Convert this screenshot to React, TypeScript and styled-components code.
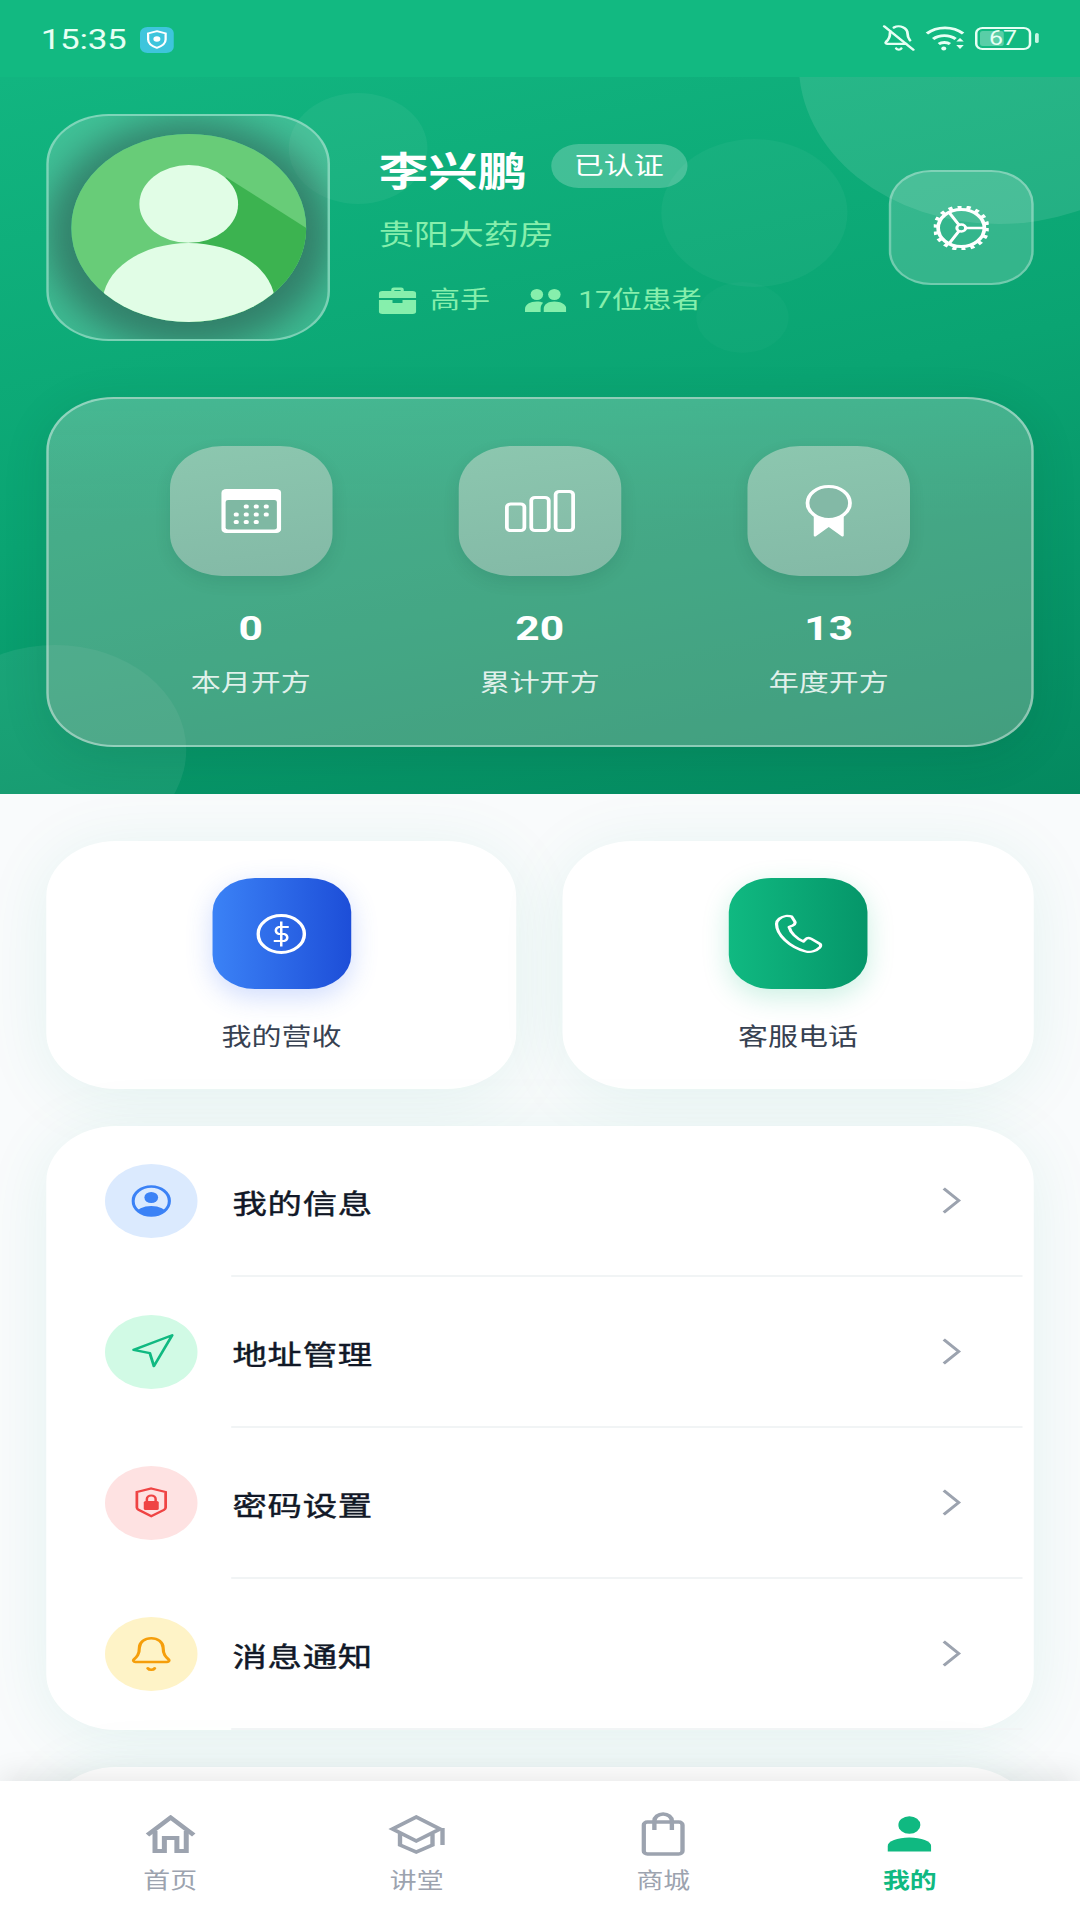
import * as React from "react";
import styled, { createGlobalStyle } from "styled-components";
import { Bell, BellOff, Navigation } from "lucide-react";

const CJK = `Roboto, "Noto Sans CJK SC", sans-serif`;

const GlobalStyle = createGlobalStyle`
  html, body {
    margin: 0;
    padding: 0;
    width: 1080px;
    height: 1920px;
    overflow: hidden;
    background: #f9fafb;
  }
  * { box-sizing: border-box; }
`;

// the reference is 864 wide layout stretched to 1080, so everything is built at 864
const Stage = styled.div`
  width: 864px;
  height: 1920px;
  transform: scaleX(1.25);
  transform-origin: 0 0;
  display: flex;
  flex-direction: column;
  overflow: hidden;
  font-family: ${CJK};
  background: #f9fafb;
`;

const StatusBar = styled.div`
  flex: none;
  height: 77px;
  padding: 0 39px 1px 32.5px;
  background: #12b981;
  display: flex;
  align-items: center;
  justify-content: space-between;
  position: relative;
  z-index: 2;
  color: #e6fff4;
`;
const StatusGroup = styled.div`
  display: flex;
  align-items: center;
`;
const ClockGroup = styled(StatusGroup)`
  margin-top: 3px;
`;
const Clock = styled.span`
  font-size: 28px;
  line-height: 32px;
  letter-spacing: -0.2px;
`;
const VpnBadge = styled.div`
  width: 27px;
  height: 26px;
  margin-left: 11px;
  border-radius: 6px;
  background: #3ec5dc;
  display: flex;
  align-items: center;
  justify-content: center;
`;
const WifiSlot = styled.div`
  margin-left: 7px;
  display: flex;
`;
const Battery = styled.div`
  width: 45px;
  height: 23px;
  margin-left: 7px;
  border: 2.5px solid #e6fff4;
  border-radius: 6px;
  position: relative;
  display: flex;
  align-items: center;
  justify-content: center;
  font-size: 20px;
  line-height: 18px;
  &::before {
    content: "";
    position: absolute;
    left: 2px;
    top: 2px;
    bottom: 2px;
    width: 19px;
    border-radius: 2px;
    background: rgba(255, 255, 255, 0.3);
  }
  &::after {
    content: "";
    position: absolute;
    right: -8px;
    top: 4px;
    width: 3px;
    height: 10px;
    border-radius: 2px;
    background: rgba(230, 255, 244, 0.85);
  }
`;
const BatteryValue = styled.span`
  position: relative;
`;

const Header = styled.div`
  flex: none;
  height: 717px;
  padding: 37px 37.5px 0 37px;
  position: relative;
  overflow: hidden;
  background: linear-gradient(165deg, #12b580 0%, #0aa472 50%, #04895f 100%);
`;
const Bubble = styled.div`
  position: absolute;
  border-radius: 50%;
`;
const CornerBubble = styled(Bubble)`
  left: 639px;
  top: -173px;
  width: 320px;
  height: 320px;
  background: rgba(255, 255, 255, 0.1);
`;
const AvatarBubble = styled(Bubble)`
  left: 231px;
  top: 16px;
  width: 111px;
  height: 111px;
  background: rgba(255, 255, 255, 0.05);
`;
const MiddleBubble = styled(Bubble)`
  left: 529px;
  top: 62px;
  width: 149px;
  height: 148px;
  background: rgba(255, 255, 255, 0.04);
`;
const SmallBubble = styled(Bubble)`
  left: 557px;
  top: 205px;
  width: 74px;
  height: 71px;
  background: rgba(255, 255, 255, 0.025);
`;
const LowBubble = styled(Bubble)`
  left: -61px;
  top: 568px;
  width: 210px;
  height: 210px;
  background: rgba(255, 255, 255, 0.07);
`;

const ProfileRow = styled.div`
  position: relative;
  display: flex;
  height: 227px;
`;
const AvatarPanel = styled.div`
  flex: none;
  width: 227px;
  height: 227px;
  border-radius: 50px;
  border: 2.5px solid rgba(255, 255, 255, 0.32);
  background: rgba(255, 255, 255, 0.2);
  overflow: hidden;
  display: flex;
  align-items: center;
  justify-content: center;
`;
const AvatarDisc = styled.svg`
  flex: none;
  width: 188px;
  height: 188px;
  border-radius: 50%;
  box-shadow: 0 6px 30px 20px rgba(40, 70, 65, 0.5);
`;
const ProfileInfo = styled.div`
  margin-left: 39px;
  padding-top: 30px;
`;
const NameRow = styled.div`
  display: flex;
  align-items: center;
  height: 44px;
`;
const Name = styled.h1`
  margin: 14px 0 0;
  font-size: 39.5px;
  line-height: 44px;
  font-weight: 700;
  color: #fff;
`;
const VerifiedBadge = styled.span`
  margin-left: 19px;
  height: 44px;
  padding: 0 18.5px;
  border-radius: 22px;
  background: rgba(255, 255, 255, 0.22);
  color: #fff;
  font-size: 24px;
  line-height: 44px;
`;
const Shop = styled.div`
  margin-top: 31px;
  font-size: 28px;
  line-height: 34px;
  color: #86efac;
`;
const MetaRow = styled.div`
  margin-top: 33px;
  display: flex;
  align-items: center;
  font-size: 24px;
  line-height: 28px;
  color: #86efac;
`;
const MetaText = styled.span`
  margin-left: 11px;
  margin-right: 28px;
`;
const PatientText = styled(MetaText)`
  margin-left: 9.5px;
`;
const GearTile = styled.div`
  flex: none;
  width: 116px;
  height: 115px;
  margin: 56px 0 0 auto;
  border-radius: 34px;
  border: 2.5px solid rgba(255, 255, 255, 0.3);
  background: rgba(255, 255, 255, 0.17);
  display: flex;
  align-items: center;
  justify-content: center;
`;

const GlassCard = styled.div`
  position: relative;
  margin-top: 56px;
  height: 350px;
  padding: 47px 46px 0;
  border-radius: 54px;
  border: 2.5px solid rgba(255, 255, 255, 0.4);
  background: linear-gradient(180deg, rgba(150, 205, 185, 0.42) 0%, rgba(160, 185, 172, 0.4) 35%);
  box-shadow: 0 10px 40px rgba(0, 60, 40, 0.12);
  display: grid;
  grid-template-columns: repeat(3, 1fr);
`;
const Stat = styled.div`
  display: flex;
  flex-direction: column;
  align-items: center;
  color: #fff;
`;
const StatTile = styled.div`
  width: 130px;
  height: 130px;
  border-radius: 42px;
  background: linear-gradient(170deg, #8cc7af, #83b9a6);
  box-shadow: 0 6px 14px rgba(0, 50, 35, 0.1);
  display: flex;
  align-items: center;
  justify-content: center;
`;
const StatValue = styled.div`
  margin-top: 32px;
  font-size: 34px;
  line-height: 40px;
  font-weight: 700;
`;
const StatLabel = styled.div`
  margin-top: 19px;
  font-size: 24px;
  line-height: 32px;
  color: rgba(255, 255, 255, 0.85);
`;

const Main = styled.div`
  flex: 1;
  min-height: 0;
  overflow: hidden;
  padding: 47px 37.5px 0 37px;
  background: #f9fbfc;
  display: flex;
  flex-direction: column;
  gap: 37px;
`;
const ActionRow = styled.div`
  flex: none;
  display: grid;
  grid-template-columns: 1fr 1fr;
  gap: 37px;
`;
const Card = styled.div`
  flex: none;
  background: #fff;
  border-radius: 56px;
  box-shadow: 0 8px 60px rgba(10, 150, 125, 0.09);
`;
const ActionCard = styled(Card)`
  height: 248px;
  padding-top: 37px;
  display: flex;
  flex-direction: column;
  align-items: center;
`;
const ActionTile = styled.div<{ $tone: "blue" | "green" }>`
  width: 111px;
  height: 111px;
  border-radius: 34px;
  display: flex;
  align-items: center;
  justify-content: center;
  color: #fff;
  background: ${(p) =>
    p.$tone === "blue"
      ? "linear-gradient(90deg, #3b82f6, #1d4ed8)"
      : "linear-gradient(90deg, #10b981, #059669)"};
  box-shadow: 0 8px 24px
    ${(p) => (p.$tone === "blue" ? "rgba(59, 110, 246, 0.24)" : "rgba(16, 185, 129, 0.22)")};
`;
const ActionLabel = styled.div`
  margin-top: 32px;
  font-size: 24px;
  line-height: 32px;
  color: #374151;
`;

const MenuCard = styled(Card)`
  height: 604px;
`;
const MenuRow = styled.div`
  height: 151px;
  padding-left: 47px;
  display: flex;
  align-items: center;
  position: relative;
  &::after {
    content: "";
    position: absolute;
    left: 148px;
    right: 9px;
    bottom: 0;
    height: 2px;
    background: #f1f4f5;
  }
`;
const MenuIcon = styled.div<{ $bg: string }>`
  flex: none;
  width: 74px;
  height: 74px;
  margin-bottom: 2px;
  border-radius: 50%;
  background: ${(p) => p.$bg};
  display: flex;
  align-items: center;
  justify-content: center;
`;
const MenuLabel = styled.div`
  margin-left: 28px;
  padding-top: 6px;
  font-size: 27.5px;
  line-height: 36px;
  letter-spacing: 0.6px;
  font-weight: 400;
  -webkit-text-stroke: 0.45px #111827;
  color: #111827;
`;
const Chevron = styled.svg`
  margin-left: auto;
  margin-right: 58px;
  margin-bottom: 3px;
`;
const NextCard = styled(Card)`
  height: 200px;
`;

const NavBar = styled.div`
  flex: none;
  height: 139px;
  padding: 31px 37.5px 0;
  background: #fff;
  position: relative;
  z-index: 2;
  box-shadow: 0 -6px 24px rgba(0, 0, 0, 0.09);
  display: grid;
  grid-template-columns: repeat(4, 1fr);
`;
const NavItem = styled.div<{ $active?: boolean }>`
  display: flex;
  flex-direction: column;
  align-items: center;
  color: ${(p) => (p.$active ? "#10b981" : "#9ca3af")};
  font-size: 21.5px;
  font-weight: ${(p) => (p.$active ? 700 : 400)};
`;
const NavGlyph = styled.div`
  height: 44px;
  display: flex;
  align-items: center;
  justify-content: center;
`;
const NavLabel = styled.div`
  margin-top: 11px;
  line-height: 28px;
`;

const stats = [
  { value: "0", label: "本月开方", icon: <CalendarIcon /> },
  { value: "20", label: "累计开方", icon: <BarsIcon /> },
  { value: "13", label: "年度开方", icon: <RibbonIcon /> },
];

const menu = [
  { label: "我的信息", bg: "#dbeafe", icon: <ProfileIcon /> },
  {
    label: "地址管理",
    bg: "#d1fae5",
    icon: <Navigation size={39} color="#10b981" strokeWidth={1.4} />,
  },
  { label: "密码设置", bg: "#fee2e2", icon: <ShieldLockIcon /> },
  { label: "消息通知", bg: "#fef3c7", icon: <Bell size={38} color="#f59e0b" strokeWidth={1.6} /> },
];

function CalendarIcon() {
  const dots = [
    [20, 17.5], [28, 17.5], [36, 17.5],
    [12, 25.5], [20, 25.5], [28, 25.5], [36, 25.5],
    [12, 33], [20, 33], [28, 33],
  ];
  return (
    <svg width="48" height="44" viewBox="0 0 48 44">
      <path d="M4 0h40a4 4 0 0 1 4 4v36a4 4 0 0 1-4 4H4a4 4 0 0 1-4-4V4a4 4 0 0 1 4-4z" fill="#fff" />
      <rect x="3.500" y="11" width="41" height="29.500" rx="2" fill="#7fb8a3" />
      {dots.map(([x, y]) => (
        <rect key={`${x}-${y}`} x={x - 2} y={y - 2} width="4" height="4" rx="1.5" fill="#fff" />
      ))}
    </svg>
  );
}

function BarsIcon() {
  return (
    <svg width="56" height="42" viewBox="0 0 56 42" fill="none" stroke="#fff" strokeWidth="3">
      <rect x="1.5" y="14" width="14" height="26.5" rx="3" />
      <rect x="21" y="7.5" width="14" height="33" rx="3" />
      <rect x="40.5" y="1.5" width="14" height="39" rx="3" />
    </svg>
  );
}

function RibbonIcon() {
  return (
    <svg width="38" height="52" viewBox="0 0 38 52">
      <path d="M7 30v20.500a1 1 0 0 0 1.700.7L19 42l10.300 9.200a1 1 0 0 0 1.700-.7V30z" fill="#fff" />
      <ellipse cx="19" cy="18" rx="17" ry="16.500" fill="#83b9a6" stroke="#fff" strokeWidth="3" />
    </svg>
  );
}

function GearIcon() {
  return (
    <svg width="44" height="44" viewBox="0 0 44 44" fill="none" stroke="#fff">
      <circle cx="22" cy="22" r="18.500" strokeWidth="3" />
      <circle cx="22" cy="22" r="21" strokeWidth="3.500" strokeDasharray="3.300 4.030" />
      <circle cx="22" cy="22" r="3.500" strokeWidth="2.500" />
      <path d="M25.500 22H40M20.200 19 12 6M20.200 25 12 38" strokeWidth="2.500" />
    </svg>
  );
}

function PhoneIcon() {
  return (
    <svg
      width="39"
      height="40"
      viewBox="0 0 35 40"
      preserveAspectRatio="none"
      fill="none"
      stroke="#fff"
      strokeWidth="2.300"
      strokeLinejoin="round"
    >
      <path d="M8.500 2C5 3 2 6 2 10c0 10.500 9 23 21 27.500 3.500 1.300 7.500-.5 10-4 1-1.500 1-3-.3-4l-6-4.800c-1.500-1-3-.7-4 .8l-1.400 2c-5.300-3-9.300-9-10.300-14.500l2.600-1.500c1.500-1 2-2.500 1.500-4l-2.400-5.200C11.800 2.300 10 1.500 8.500 2z" />
    </svg>
  );
}

function ProfileIcon() {
  return (
    <svg width="32" height="32" viewBox="0 0 32 32">
      <clipPath id="ringClip">
        <circle cx="16" cy="16" r="15" />
      </clipPath>
      <circle cx="16" cy="12.500" r="5.500" fill="#3b82f6" />
      <ellipse cx="16" cy="29" rx="12" ry="8" fill="#3b82f6" clipPath="url(#ringClip)" />
      <circle cx="16" cy="16" r="14.500" fill="none" stroke="#3b82f6" strokeWidth="2.500" />
    </svg>
  );
}

function ShieldLockIcon() {
  return (
    <svg width="26" height="31" viewBox="0 0 26 31">
      <path
        d="M13 1.500 24.500 5v15.500c0 1-.4 1.700-1.300 2.300L13 29.300 2.800 22.800c-.9-.6-1.300-1.300-1.300-2.300V5z"
        fill="none"
        stroke="#ef4444"
        strokeWidth="2.200"
      />
      <rect x="7" y="14" width="12" height="9" rx="1.500" fill="#ef4444" />
      <path d="M9.500 14.500v-2.500a3.500 3.500 0 0 1 7 0v2.500" fill="none" stroke="#ef4444" strokeWidth="2" />
    </svg>
  );
}

function WifiIcon() {
  return (
    <svg width="33" height="26" viewBox="0 0 33 26" fill="none" stroke="#e6fff4" strokeWidth="2.800">
      <path d="M1.500 8.500C9.500 1 22.500 1 30.500 8.500" />
      <path d="M6.500 14c5-4.500 13-4.500 18 0" />
      <path d="M11 19c2.500-2 6.500-2 9 0" />
      <circle cx="15" cy="23.500" r="2" fill="#e6fff4" stroke="none" />
      <path d="M25 16.500h6l-3-3.500zM25 20h6l-3 4z" fill="#e6fff4" stroke="none" />
    </svg>
  );
}

function NavHome() {
  return (
    <svg width="43" height="38" viewBox="0 0 43 38" fill="none" stroke="currentColor" strokeWidth="4">
      <path d="M3 20 21.500 2.500 40 20" />
      <path d="M9 16v20h7.500V23h10v13H34V16" />
    </svg>
  );
}

function NavSchool() {
  return (
    <svg width="47" height="39" viewBox="0 0 47 39" fill="none" stroke="currentColor" strokeWidth="3.500">
      <path d="M23 2 42 14 23 26 4 14z" />
      <path d="M10 19v11l13 7 13-7V19" />
      <path d="M44 13v17" />
    </svg>
  );
}

function NavBag() {
  return (
    <svg width="35" height="44" viewBox="0 0 35 44" fill="none" stroke="currentColor" strokeWidth="3.500">
      <rect x="2" y="10" width="31" height="32" rx="3" />
      <path d="M10.500 18V9a7 7 0 0 1 14 0v9" />
    </svg>
  );
}

function NavUser() {
  return (
    <svg width="35" height="36" viewBox="0 0 35 36" fill="currentColor">
      <circle cx="17.500" cy="9" r="8.800" />
      <path d="M0 35.500v-5C0 25 8 21.500 17.500 21.500S35 25 35 30.500v5z" />
    </svg>
  );
}

export default function App() {
  return (
    <Stage>
      <GlobalStyle />
      <StatusBar>
        <ClockGroup>
          <Clock>15:35</Clock>
          <VpnBadge>
            <svg width="17" height="19" viewBox="0 0 17 19">
              <path
                d="M8.500 1.200 15.500 3.500v6c0 3.800-3 6.700-7 8.300-4-1.600-7-4.500-7-8.300v-6z"
                fill="none"
                stroke="#fff"
                strokeWidth="1.800"
              />
              <circle cx="8.500" cy="9" r="2.800" fill="#fff" />
            </svg>
          </VpnBadge>
        </ClockGroup>
        <StatusGroup>
          <BellOff size={28} strokeWidth={1.9} />
          <WifiSlot>
            <WifiIcon />
          </WifiSlot>
          <Battery>
            <BatteryValue>67</BatteryValue>
          </Battery>
        </StatusGroup>
      </StatusBar>

      <Header>
        <CornerBubble />
        <AvatarBubble />
        <MiddleBubble />
        <SmallBubble />
        <LowBubble />

        <ProfileRow>
          <AvatarPanel>
            <AvatarDisc viewBox="0 0 100 100">
              <rect width="100" height="100" fill="#68cc78" />
              <path d="M66 23 100 50V100H50V40z" fill="#3cb350" />
              <ellipse cx="50" cy="37.200" rx="21" ry="20.700" fill="#e1fde6" />
              <ellipse cx="50" cy="90" rx="36.700" ry="32" fill="#e1fde6" />
            </AvatarDisc>
          </AvatarPanel>
          <ProfileInfo>
            <NameRow>
              <Name>李兴鹏</Name>
              <VerifiedBadge>已认证</VerifiedBadge>
            </NameRow>
            <Shop>贵阳大药房</Shop>
            <MetaRow>
              <svg width="30" height="27" viewBox="0 0 30 27" fill="#86efac">
                <path d="M10 4V2.500A2 2 0 0 1 12 .5h6a2 2 0 0 1 2 2V4h-2.500V3h-5v1z" />
                <path d="M3 4h24a3 3 0 0 1 3 3v4H0V7a3 3 0 0 1 3-3z" />
                <path d="M0 13h11v3h8v-3h11v11a3 3 0 0 1-3 3H3a3 3 0 0 1-3-3z" />
              </svg>
              <MetaText>高手</MetaText>
              <svg width="33" height="23" viewBox="0 0 33 23" fill="#86efac">
                <ellipse cx="9.500" cy="5.500" rx="5" ry="5.500" />
                <ellipse cx="23.500" cy="5.500" rx="5" ry="5.500" />
                <path d="M0 23v-3c0-4.500 4-7.500 9.500-7.500 2 0 3.600.4 5 1.200-1.300 1.500-2 3.400-2 5.800V23z" />
                <path d="M15 23v-3.500c0-4.200 3.600-7 8.500-7S33 15.300 33 19.500V23z" />
              </svg>
              <PatientText>17位患者</PatientText>
            </MetaRow>
          </ProfileInfo>
          <GearTile>
            <GearIcon />
          </GearTile>
        </ProfileRow>

        <GlassCard>
          {stats.map((s) => (
            <Stat key={s.label}>
              <StatTile>{s.icon}</StatTile>
              <StatValue>{s.value}</StatValue>
              <StatLabel>{s.label}</StatLabel>
            </Stat>
          ))}
        </GlassCard>
      </Header>

      <Main>
        <ActionRow>
          <ActionCard>
            <ActionTile $tone="blue">
              <svg width="40" height="40" viewBox="0 0 40 40" fill="none" stroke="#fff">
                <circle cx="20" cy="20" r="18.500" strokeWidth="2.800" />
                <path
                  d="M20 7.500v25M26 13h-8a3.800 3.800 0 0 0 0 7h4.500a3.800 3.800 0 0 1 0 7H14"
                  strokeWidth="2"
                />
              </svg>
            </ActionTile>
            <ActionLabel>我的营收</ActionLabel>
          </ActionCard>
          <ActionCard>
            <ActionTile $tone="green">
              <PhoneIcon />
            </ActionTile>
            <ActionLabel>客服电话</ActionLabel>
          </ActionCard>
        </ActionRow>

        <MenuCard>
          {menu.map((m) => (
            <MenuRow key={m.label}>
              <MenuIcon $bg={m.bg}>{m.icon}</MenuIcon>
              <MenuLabel>{m.label}</MenuLabel>
              <Chevron width="16" height="27" viewBox="0 0 16 27" fill="none" stroke="#9ca3af" strokeWidth="2.600">
                <path d="M2 1.500 14 13.500 2 25.500" />
              </Chevron>
            </MenuRow>
          ))}
        </MenuCard>

        <NextCard />
      </Main>

      <NavBar>
        <NavItem>
          <NavGlyph>
            <NavHome />
          </NavGlyph>
          <NavLabel>首页</NavLabel>
        </NavItem>
        <NavItem>
          <NavGlyph>
            <NavSchool />
          </NavGlyph>
          <NavLabel>讲堂</NavLabel>
        </NavItem>
        <NavItem>
          <NavGlyph>
            <NavBag />
          </NavGlyph>
          <NavLabel>商城</NavLabel>
        </NavItem>
        <NavItem $active>
          <NavGlyph>
            <NavUser />
          </NavGlyph>
          <NavLabel>我的</NavLabel>
        </NavItem>
      </NavBar>
    </Stage>
  );
}
